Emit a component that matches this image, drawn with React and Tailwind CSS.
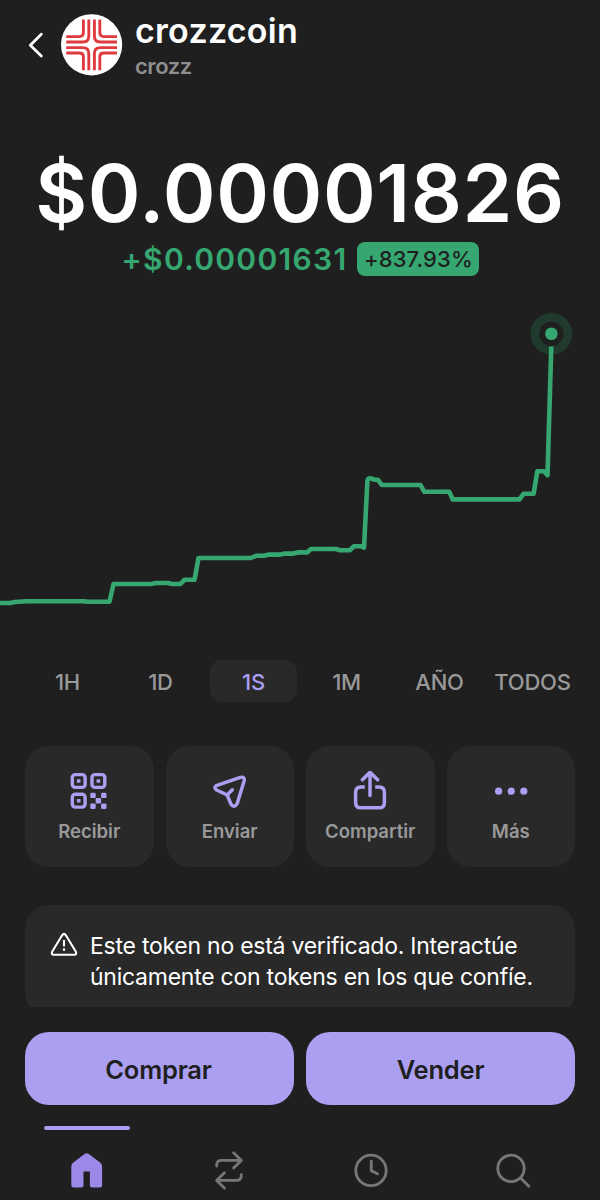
import React, { useState } from 'react';

const ranges = ['1H', '1D', '1S', '1M', 'AÑO', 'TODOS'];

const BackIcon = () => (
  <svg width="20" height="30" viewBox="26 30 20 30" fill="none" stroke="#fff" strokeWidth="2.8" strokeLinecap="round" strokeLinejoin="round">
    <path d="M41.3 34.3 30.3 45.2l11 10.7" />
  </svg>
);

const TokenLogo = () => (
  <svg width="62" height="62" viewBox="-30.6 -30.8 62 62" fill="none" stroke="#e03a3e" strokeWidth="2.9">
    <circle r="30.6" fill="#fff" stroke="none" />
    {[0, 90, 180, 270].map((angle) => (
      <g key={angle} transform={`rotate(${angle})`}>
        <path d="M-8.2-25.4V-12.2Q-8.2-8.2-12.2-8.2H-25.4" />
        <path d="M-2.8-25.4V-8.8Q-2.8-2.8-8.8-2.8H-25.4" />
      </g>
    ))}
  </svg>
);

const QrIcon = () => (
  <svg width="40" height="40" viewBox="0.4 0 40 40" fill="none" stroke="#ab9ff2" strokeWidth="3.4">
    <rect x="3.7" y="3.6" width="12.8" height="12.8" rx="3" />
    <rect x="23.4" y="3.6" width="12.8" height="12.8" rx="3" />
    <rect x="3.7" y="23.3" width="12.8" height="12.8" rx="3" />
    <g fill="#ab9ff2" stroke="none">
      <rect x="8.3" y="8.2" width="3.6" height="3.6" rx="0.6" />
      <rect x="28" y="8.2" width="3.6" height="3.6" rx="0.6" />
      <rect x="8.3" y="27.9" width="3.6" height="3.6" rx="0.6" />
      <rect x="21.7" y="21.7" width="5.4" height="5.4" rx="1.2" />
      <rect x="32.5" y="21.7" width="5.4" height="5.4" rx="1.2" />
      <rect x="27.1" y="27.1" width="5.4" height="5.4" rx="1.2" />
      <rect x="21.7" y="32.5" width="5.4" height="5.4" rx="1.2" />
      <rect x="32.5" y="32.5" width="5.4" height="5.4" rx="1.2" />
    </g>
  </svg>
);

const SendIcon = () => (
  <svg width="40" height="40" viewBox="0 0 40 40" fill="none" stroke="#ab9ff2" strokeWidth="3.5" strokeLinecap="round" strokeLinejoin="round">
    <path d="M6.2 14.6 30.4 6.4Q35.1 5.4 34.2 9.8L27.2 32.6Q24.2 37.4 20.9 33.2L17.2 24 6.6 19Q3.4 16.6 6.2 14.6Z" />
    <path d="M17.2 24 22.3 18.8" />
  </svg>
);

const ShareIcon = () => (
  <svg width="40" height="40" viewBox="0 0 40 40" fill="none" stroke="#ab9ff2" strokeWidth="3.5" strokeLinecap="round" strokeLinejoin="round">
    <path d="M20 24.6V1.4M12.4 8.8 20 1.2 27.6 8.8" />
    <path strokeLinecap="butt" d="M14.8 15.9H11Q5.6 15.9 5.6 21.3V31.4Q5.6 36.8 11 36.8H29Q34.4 36.8 34.4 31.4V21.3Q34.4 15.9 29 15.9H25.2" />
  </svg>
);

const MoreIcon = () => (
  <svg width="40" height="40" viewBox="0 0 40 40" fill="#ab9ff2">
    <circle cx="7.6" cy="20.2" r="3.6" />
    <circle cx="20.2" cy="20.2" r="3.6" />
    <circle cx="32.8" cy="20.2" r="3.6" />
  </svg>
);

const WarningIcon = () => (
  <svg width="28" height="26" viewBox="0 0 28 26" fill="none" stroke="#fff" strokeWidth="2.1" strokeLinecap="round" strokeLinejoin="round">
    <path d="M12.3 3 2.1 19.8Q1 22.7 3.8 22.8H24.2Q27 22.7 25.9 19.8L15.7 3Q14 .8 12.3 3Z" />
    <path d="M14 8.8v4.8" />
    <circle cx="14" cy="17.6" r="1.3" fill="#fff" stroke="none" />
  </svg>
);

const HomeIcon = () => (
  <svg width="40" height="40" viewBox="0.3 0 40 40" fill="#9c88e8">
    <path d="M17.9 3.9Q20 2.4 22.1 3.9L33.7 12.7Q35.4 14 35.4 16.2V35.2Q35.4 37.4 33.2 37.4H25.4Q23.2 37.4 23.2 35.2V21.5H16.8V35.2Q16.8 37.4 14.6 37.4H6.8Q4.6 37.4 4.6 35.2V16.2Q4.6 14 6.3 12.7Z" />
  </svg>
);

const SwapIcon = () => (
  <svg width="40" height="40" viewBox="0 0 40 40" fill="none" stroke="#777" strokeWidth="2.8" strokeLinecap="round" strokeLinejoin="round">
    <path d="M7.7 16V14.8Q7.7 10.4 12.7 10.4H32.2M24.6 2.8 32.4 10.4 24.6 18" />
    <path d="M32.3 24.6V25.4Q32.3 30.3 27.3 30.3H7.8M15.4 22.8 7.6 30.4 15.4 38" />
  </svg>
);

const ClockIcon = () => (
  <svg width="40" height="40" viewBox="0 -0.4 40 40" fill="none" stroke="#777" strokeWidth="2.8" strokeLinecap="round" strokeLinejoin="round">
    <circle cx="20" cy="20" r="15.2" />
    <path d="M20.3 10.8V20.4L26.5 23.4" />
  </svg>
);

const SearchIcon = () => (
  <svg width="40" height="40" viewBox="0 -0.4 40 40" fill="none" stroke="#777" strokeWidth="2.8" strokeLinecap="round">
    <circle cx="18" cy="18" r="13.2" />
    <path d="M27.4 27.4 35.8 35.8" />
  </svg>
);

const actions = [
  { label: 'Recibir', Icon: QrIcon },
  { label: 'Enviar', Icon: SendIcon },
  { label: 'Compartir', Icon: ShareIcon },
  { label: 'Más', Icon: MoreIcon },
];

const tabs = [
  { id: 'home', Icon: HomeIcon },
  { id: 'swap', Icon: SwapIcon },
  { id: 'activity', Icon: ClockIcon },
  { id: 'search', Icon: SearchIcon },
];

const PriceChart = () => (
  <svg className="block shrink-0" width="600" height="320" viewBox="0 300 600 320" fill="none">
    <circle cx="551.4" cy="333.8" r="16.5" stroke="#213a2e" strokeWidth="8.6" />
    <circle cx="551.4" cy="333.8" r="6.3" fill="#36a771" />
    <path
      d="M-3 603H10L15 602 27 601.3H83L88 601.8H109.5L113.5 584H151L156 583H168L172 584H180.5L184.5 579.8H194.5L198.5 558H251L256 555.8H264L269 554.6H280L285 553.6H293L298 552.4H307L311 549H336L340 550.2H350L354 546.2H361L364 547.6 367.4 481Q367.8 477.6 371 478.5L375 479.8H378L381.8 485H420.5L424.3 491.8H449.2L452.8 499.4H519.5L523.5 493.8H533.6L537.3 471.3H544L547.5 475.3 551.3 346.5"
      stroke="#36a771"
      strokeWidth="4.6"
      strokeLinejoin="round"
    />
  </svg>
);

const App = () => {
  const [range, setRange] = useState('1S');
  const [activeTab, setActiveTab] = useState('home');

  return (
    <div className="flex h-[1200px] w-[600px] flex-col overflow-hidden bg-[#1f1f1f] font-['Inter',sans-serif] text-white">
      {/* Header */}
      <header className="flex h-[90px] shrink-0 items-center pl-[26px]">
        <button className="mr-[15px]"><BackIcon /></button>
        <TokenLogo />
        <div className="ml-3 pt-px">
          <h1 className="text-[34px] leading-[40px] font-semibold tracking-[0.25px]">crozzcoin</h1>
          <p className="text-[22px] leading-[30px] font-semibold tracking-[-0.45px] text-[#8f8f8f]">crozz</p>
        </div>
      </header>

      {/* Price */}
      <section className="flex h-[210px] shrink-0 flex-col items-center pt-[57px]">
        <div className="text-[80px] leading-[92px] font-semibold tracking-[0.6px] whitespace-nowrap">$0.00001826</div>
        <div className="mt-[2px] flex items-center gap-[10px] pl-px">
          <span className="pt-px text-[30px] leading-[34px] font-semibold tracking-[1.3px] text-[#36a771]">+$0.00001631</span>
          <span className="flex h-[34px] w-[122px] items-center justify-center rounded-lg bg-[#36a771] pt-px text-[22px] font-medium tracking-[0.1px] text-[#1f1f1f]">+837.93%</span>
        </div>
      </section>

      <PriceChart />

      {/* Range selector */}
      <div className="mt-10 grid h-[42px] shrink-0 grid-cols-6 gap-[6px] px-6">
        {ranges.map((item) => (
          <button
            key={item}
            onClick={() => setRange(item)}
            className={`flex items-center justify-center rounded-xl pt-[2px] text-[22px] font-medium tracking-[-0.25px] whitespace-nowrap ${range === item ? 'bg-[#292929] text-[#ab9ff2]' : 'text-[#999]'}`}
          >
            {item}
          </button>
        ))}
      </div>

      {/* Actions */}
      <div className="mt-[44px] grid h-[121px] shrink-0 grid-cols-4 gap-3 px-[25px]">
        {actions.map(({ label, Icon }) => (
          <button key={label} className="flex flex-col items-center rounded-[24px] bg-[#292929] pt-[25px]">
            <Icon />
            <span className="mt-[7px] text-[18.5px] leading-[26px] font-semibold text-[#999]">{label}</span>
          </button>
        ))}
      </div>

      {/* Unverified token warning */}
      <div className="mx-[25px] mt-[38px] h-[102px] shrink-0 overflow-hidden">
        <div className="flex h-[111px] rounded-[24px] bg-[#292929] pt-[26px] pl-[25px]">
          <div className="pt-[1px]"><WarningIcon /></div>
          <p className="ml-3 text-[23px] leading-[31px] tracking-[-0.25px] whitespace-nowrap">
            Este token no está verificado. Interactúe<br />
            únicamente con tokens en los que confíe.
          </p>
        </div>
      </div>

      <div className="mt-[25px] grid h-[73px] shrink-0 grid-cols-2 gap-3 px-[25px]">
        <button className="rounded-[24px] bg-[#ab9ff2] pt-[3px] pr-[2px] text-[25.5px] font-semibold tracking-[-0.2px] text-[#1f1f1f]">Comprar</button>
        <button className="rounded-[24px] bg-[#ab9ff2] pt-[3px] text-[25.5px] font-semibold tracking-[-0.2px] text-[#1f1f1f]">Vender</button>
      </div>

      {/* Bottom navigation */}
      <nav className="mt-[21px] grid grid-cols-4 px-4">
        {tabs.map(({ id, Icon }) => (
          <button key={id} onClick={() => setActiveTab(id)} className="flex flex-col items-center">
            <span className={`mb-[20px] h-[4px] w-[86px] rounded-full ${activeTab === id ? 'bg-[#ab9ff2]' : ''}`} />
            <Icon />
          </button>
        ))}
      </nav>
    </div>
  );
};

export default App;
